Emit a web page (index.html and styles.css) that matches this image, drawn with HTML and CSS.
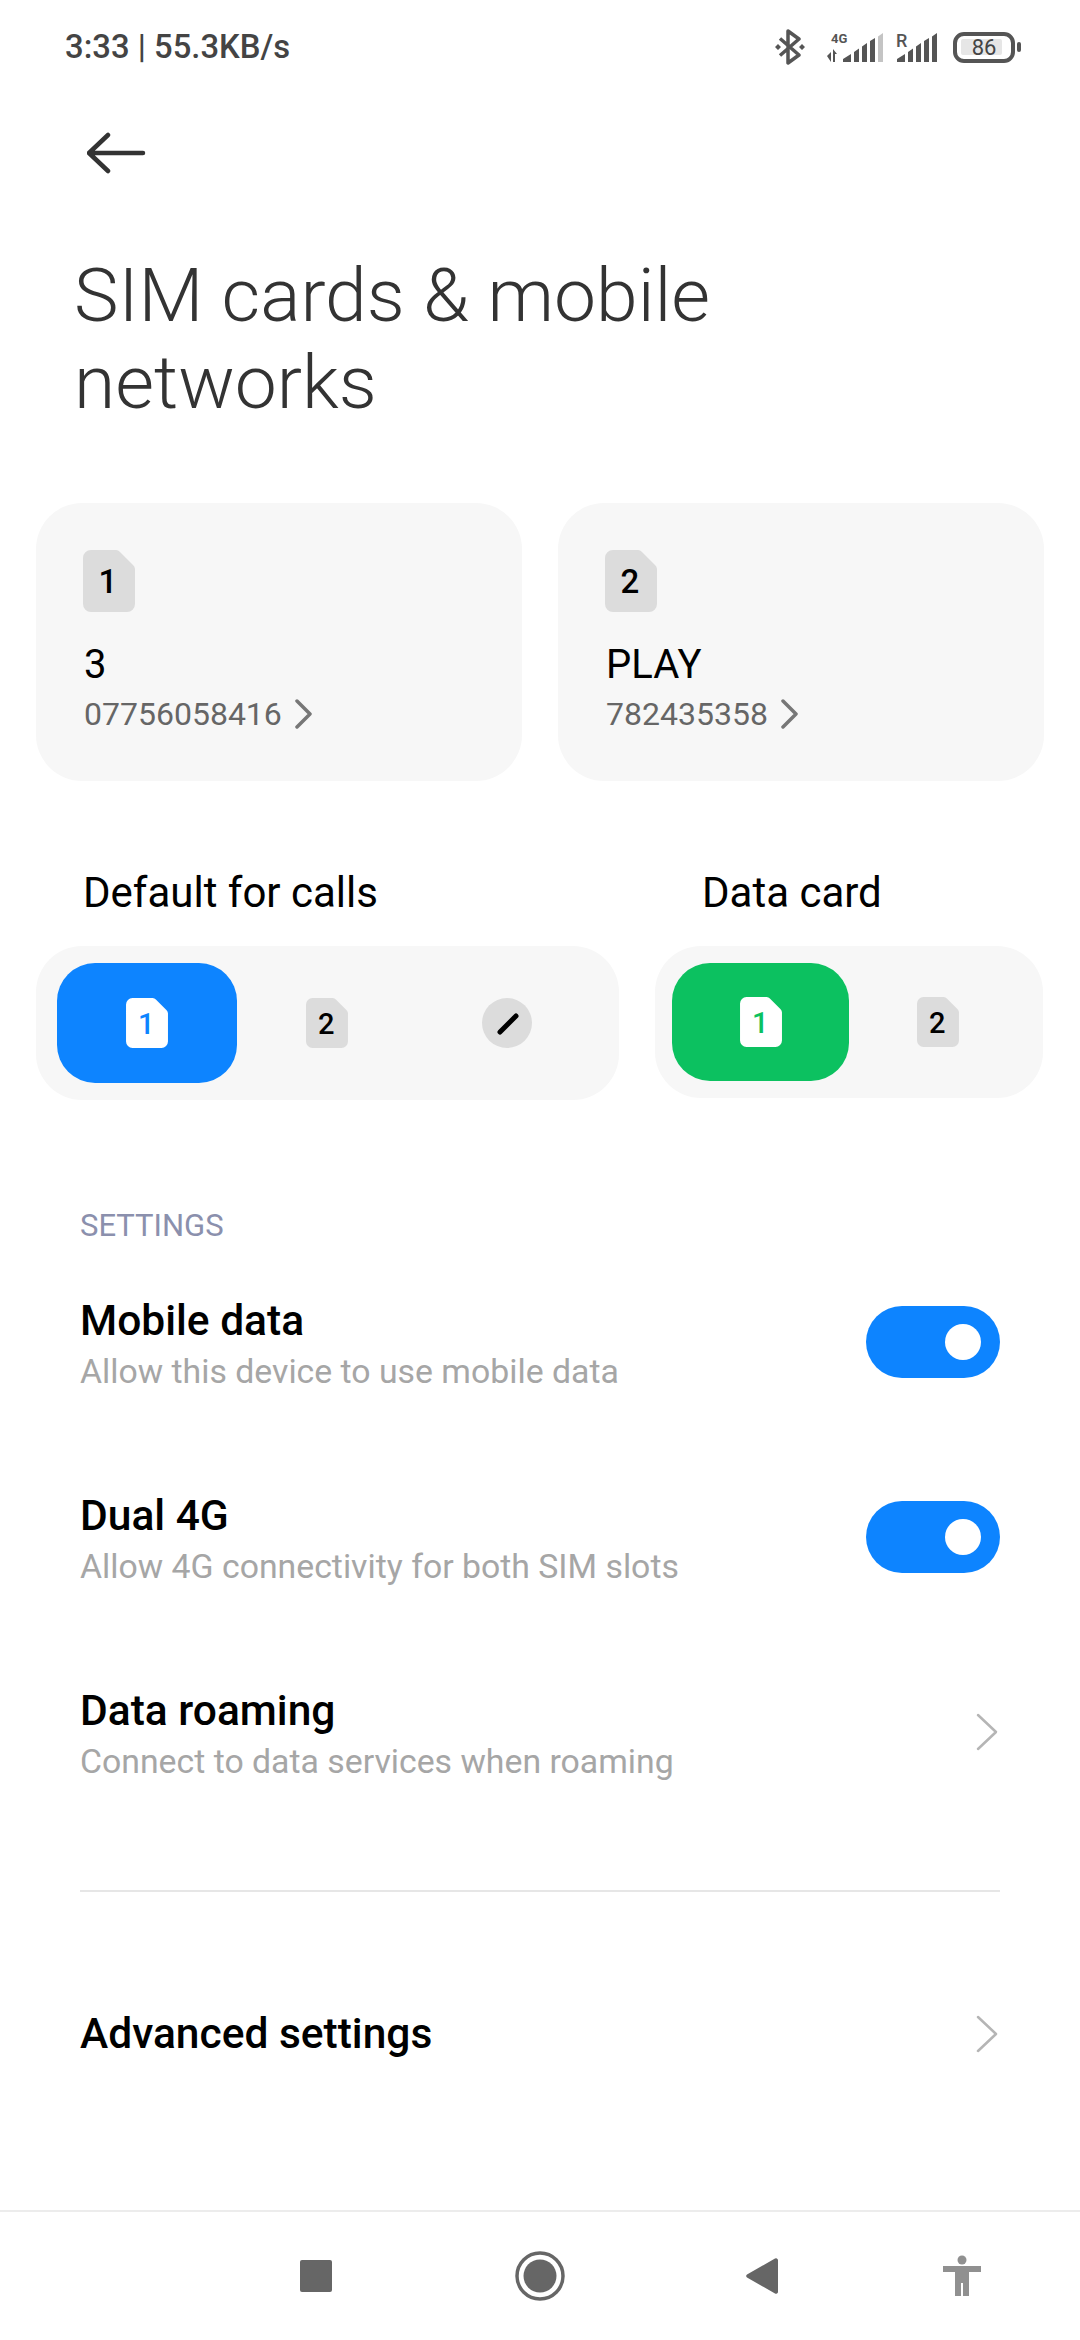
FILE: index.html
```html
<!DOCTYPE html>
<html lang="en">
<head>
    <meta charset="UTF-8">
    <meta name="viewport" content="width=device-width, initial-scale=1.0">
    <title>SIM cards &amp; mobile networks</title>
    <link rel="stylesheet" href="styles.css">
</head>
<body>
<div class="page">

    <!-- Status bar -->
    <div class="status-bar">
        <span class="status-time">3:33 | 55.3KB/s</span>
        <div class="status-icons">
            <svg class="icon-bt" width="32" height="36" viewBox="773 28 32 36">
                <path d="M779 37.500L798 54 787 62V30L798 38 779 54.500" fill="none" stroke="#555" stroke-width="3.500" stroke-linejoin="round"/>
                <path d="M777 43l3 3-3 3-3-3zM801 43l3 3-3 3-3-3z" fill="#555"/>
            </svg>
            <svg class="icon-signal" width="58" height="34" viewBox="825 28 58 34">
                <text x="830" y="41" class="net-text">4G</text>
                <path d="M826 54l4-4v10zM832 60V47l4 5h-2v8z" fill="#555"/>
                <path d="M842 60v-3l8-5v8zM853 60V50l5-3.500V60zM861 60V44.500l5-3.500v19zM869 60V39l5-3V60z" fill="#555"/>
                <path d="M877 60V34.500L882 31v29z" fill="#c4c4c4"/>
            </svg>
            <svg class="icon-signal" width="42" height="34" viewBox="895 28 42 34">
                <text x="895" y="45" class="roam-text">R</text>
                <path d="M896 60v-3l8-5v8zM907 60V50l5-3.500V60zM915 60V44.500l5-3.500v19zM923 60V39l5-3V60zM931 60V34.500L936 31v29z" fill="#555"/>
            </svg>
            <svg class="icon-battery" width="69" height="34" viewBox="952 29 69 34">
                <rect x="954" y="33" width="58" height="27" rx="9" fill="none" stroke="#555" stroke-width="4"/>
                <rect x="960" y="38" width="41" height="16" rx="2" fill="#e6e6e6"/>
                <rect x="1016" y="41" width="4" height="10" rx="2" fill="#555"/>
                <text x="983" y="54" text-anchor="middle" class="battery-text">86</text>
            </svg>
        </div>
    </div>

    <!-- Back -->
    <div class="top-bar">
        <svg width="60" height="44" viewBox="0 0 60 44">
            <path d="M2 22H56M21 4L2 22 21 40" fill="none" stroke="#333" stroke-width="4.500" stroke-linecap="round" stroke-linejoin="round"/>
        </svg>
    </div>

    <h1 class="page-title">SIM cards &amp; mobile<br>networks</h1>

    <!-- SIM cards -->
    <div class="sim-cards">
        <div class="sim-card">
            <svg class="sim-icon" width="52" height="62" viewBox="0 0 52 62">
                <path class="sim-grey" d="M8 0H33a6 6 0 0 1 4 2L50 15a6 6 0 0 1 2 4V54a8 8 0 0 1-8 8H8a8 8 0 0 1-8-8V8a8 8 0 0 1 8-8z"/>
                <text x="25" y="43" text-anchor="middle" class="sim-num">1</text>
            </svg>
            <div class="sim-name">3</div>
            <div class="sim-number">
                <span>07756058416</span>
                <svg width="18" height="30" viewBox="0 0 18 30"><path d="M2 2L15 15 2 28" fill="none" stroke="#777" stroke-width="3.500" stroke-linecap="round" stroke-linejoin="round"/></svg>
            </div>
        </div>
        <div class="sim-card">
            <svg class="sim-icon" width="52" height="62" viewBox="0 0 52 62">
                <path class="sim-grey" d="M8 0H33a6 6 0 0 1 4 2L50 15a6 6 0 0 1 2 4V54a8 8 0 0 1-8 8H8a8 8 0 0 1-8-8V8a8 8 0 0 1 8-8z"/>
                <text x="25" y="43" text-anchor="middle" class="sim-num">2</text>
            </svg>
            <div class="sim-name">PLAY</div>
            <div class="sim-number">
                <span>782435358</span>
                <svg width="18" height="30" viewBox="0 0 18 30"><path d="M2 2L15 15 2 28" fill="none" stroke="#777" stroke-width="3.500" stroke-linecap="round" stroke-linejoin="round"/></svg>
            </div>
        </div>
    </div>

    <!-- Default SIM pickers -->
    <div class="pickers">
        <div class="picker-col">
            <div class="picker-label">Default for calls</div>
            <div class="picker picker-calls">
                <div class="picker-slot slot-blue">
                    <svg width="42" height="50" viewBox="0 0 52 62">
                        <path fill="#fff" d="M8 0H33a6 6 0 0 1 4 2L50 15a6 6 0 0 1 2 4V54a8 8 0 0 1-8 8H8a8 8 0 0 1-8-8V8a8 8 0 0 1 8-8z"/>
                        <text x="25" y="45" text-anchor="middle" class="sim-num-small num-blue">1</text>
                    </svg>
                </div>
                <div class="picker-slot">
                    <svg width="42" height="50" viewBox="0 0 52 62">
                        <path class="sim-grey" d="M8 0H33a6 6 0 0 1 4 2L50 15a6 6 0 0 1 2 4V54a8 8 0 0 1-8 8H8a8 8 0 0 1-8-8V8a8 8 0 0 1 8-8z"/>
                        <text x="25" y="45" text-anchor="middle" class="sim-num-small">2</text>
                    </svg>
                </div>
                <div class="picker-slot">
                    <svg width="50" height="50" viewBox="0 0 50 50">
                        <circle cx="25" cy="25" r="25" fill="#dcdcdc"/>
                        <path d="M34 18L18 34" stroke="#000" stroke-width="5" stroke-linecap="round"/>
                    </svg>
                </div>
            </div>
        </div>
        <div class="picker-col">
            <div class="picker-label">Data card</div>
            <div class="picker picker-data">
                <div class="picker-slot slot-green">
                    <svg width="42" height="50" viewBox="0 0 52 62">
                        <path fill="#fff" d="M8 0H33a6 6 0 0 1 4 2L50 15a6 6 0 0 1 2 4V54a8 8 0 0 1-8 8H8a8 8 0 0 1-8-8V8a8 8 0 0 1 8-8z"/>
                        <text x="25" y="45" text-anchor="middle" class="sim-num-small num-green">1</text>
                    </svg>
                </div>
                <div class="picker-slot">
                    <svg width="42" height="50" viewBox="0 0 52 62">
                        <path class="sim-grey" d="M8 0H33a6 6 0 0 1 4 2L50 15a6 6 0 0 1 2 4V54a8 8 0 0 1-8 8H8a8 8 0 0 1-8-8V8a8 8 0 0 1 8-8z"/>
                        <text x="25" y="45" text-anchor="middle" class="sim-num-small">2</text>
                    </svg>
                </div>
            </div>
        </div>
    </div>

    <!-- Settings -->
    <div class="section-label">SETTINGS</div>

    <div class="row">
        <div class="row-text">
            <div class="row-title">Mobile data</div>
            <div class="row-sub">Allow this device to use mobile data</div>
        </div>
        <div class="toggle"><div class="toggle-knob"></div></div>
    </div>
    <div class="row">
        <div class="row-text">
            <div class="row-title">Dual 4G</div>
            <div class="row-sub">Allow 4G connectivity for both SIM slots</div>
        </div>
        <div class="toggle"><div class="toggle-knob"></div></div>
    </div>
    <div class="row">
        <div class="row-text">
            <div class="row-title">Data roaming</div>
            <div class="row-sub">Connect to data services when roaming</div>
        </div>
        <svg class="chevron" width="22" height="38" viewBox="0 0 22 38"><path d="M2 2L20 19 2 36" fill="none" stroke="#b5b5b5" stroke-width="2.500" stroke-linecap="round" stroke-linejoin="round"/></svg>
    </div>

    <div class="divider"></div>

    <div class="row row-single">
        <div class="row-title">Advanced settings</div>
        <svg class="chevron" width="22" height="38" viewBox="0 0 22 38"><path d="M2 2L20 19 2 36" fill="none" stroke="#b5b5b5" stroke-width="2.500" stroke-linecap="round" stroke-linejoin="round"/></svg>
    </div>

    <!-- Navigation bar -->
    <div class="nav-bar">
        <svg class="nav-recent" width="32" height="32" viewBox="0 0 32 32"><rect width="32" height="32" rx="2" fill="#666"/></svg>
        <svg class="nav-home" width="50" height="50" viewBox="0 0 50 50">
            <circle cx="25" cy="25" r="23" fill="none" stroke="#666" stroke-width="3.500"/>
            <circle cx="25" cy="25" r="16.500" fill="#666"/>
        </svg>
        <svg class="nav-back" width="32" height="38" viewBox="0 0 32 38">
            <path d="M29 1.500a2 2 0 0 1 3 1.500V35a2 2 0 0 1-3 1.500L1 20.500a2 2 0 0 1 0-3z" fill="#666"/>
        </svg>
        <svg class="nav-access" width="38" height="42" viewBox="0 0 38 42">
            <circle cx="19" cy="5" r="4.500" fill="#909090"/>
            <path d="M0 11H38V17H26V41H20V28H18V41H12V17H0z" fill="#909090"/>
        </svg>
    </div>

</div>
</body>
</html>
```

FILE: styles.css
```css
* {
    margin: 0;
    padding: 0;
    box-sizing: border-box;
}

body {
    font-family: Roboto, "Noto Sans", sans-serif;
    background-color: #fff;
    color: #000;
}

.page {
    width: 1080px;
    height: 2340px;
    display: flex;
    flex-direction: column;
    overflow: hidden;
}

/* status bar */
.status-bar {
    height: 94px;
    padding: 0 58px 0 65px;
    display: flex;
    justify-content: space-between;
    align-items: center;
}

.status-time {
    font-size: 32.800px;
    font-weight: 500;
    color: #444;
}

.status-icons {
    display: flex;
    align-items: center;
}

.icon-bt {
    margin-right: 20px;
}

.icon-signal {
    margin-right: 12px;
}

.icon-signal:nth-child(3) {
    margin-right: 15px;
}

.net-text {
    font-size: 13px;
    font-weight: 700;
    fill: #555;
}

.roam-text {
    font-size: 18px;
    font-weight: 500;
    fill: #555;
}

.battery-text {
    font-size: 22px;
    fill: #444;
}

.top-bar {
    height: 44px;
    margin-top: 37px;
    padding-left: 87px;
}

.top-bar svg {
    display: block;
}

.page-title {
    margin-top: 77px;
    padding-left: 74px;
    font-size: 75px;
    line-height: 87px;
    font-weight: 300;
    color: #333;
}

/* sim cards */
.sim-cards {
    margin-top: 77px;
    padding: 0 36px;
    display: flex;
    gap: 36px;
}

.sim-card {
    width: 486px;
    height: 278px;
    padding: 47px 48px 0;
    background-color: #f7f7f7;
    border-radius: 46px;
}

.sim-icon {
    display: block;
    margin-left: -1px;
}

.sim-grey {
    fill: #dcdcdc;
}

.sim-num {
    font-size: 33px;
    font-weight: 500;
    fill: #000;
}

.sim-num-small {
    font-size: 36px;
    font-weight: 500;
    fill: #000;
}

.num-blue {
    fill: #0d84ff;
}

.num-green {
    fill: #0cc160;
}

.sim-name {
    margin-top: 29px;
    font-size: 40px;
    line-height: 47px;
}

.sim-number {
    margin-top: 6px;
    display: flex;
    align-items: center;
    gap: 13px;
    font-size: 32px;
    line-height: 40px;
    color: #666;
}

/* default pickers */
.pickers {
    margin-top: 88px;
    padding: 0 36px;
    display: flex;
    gap: 36px;
}

.picker-label {
    padding-left: 47px;
    font-size: 42px;
    line-height: 47px;
}

.picker {
    margin-top: 30px;
    padding: 17px 22px 17px 21px;
    display: flex;
    background-color: #f7f7f7;
    border-radius: 46px;
}

.picker-calls {
    width: 583px;
    height: 154px;
}

.picker-data {
    width: 388px;
    height: 152px;
    padding: 17px;
}

.picker-slot {
    width: 180px;
    height: 120px;
    display: flex;
    justify-content: center;
    align-items: center;
    border-radius: 38px;
}

.picker-data .picker-slot {
    width: 177px;
    height: 118px;
}

.slot-blue {
    background-color: #0d84ff;
}

.slot-green {
    background-color: #0cc160;
}

/* settings rows */
.section-label {
    margin-top: 108px;
    padding-left: 80px;
    font-size: 31px;
    line-height: 36px;
    color: #8b90ad;
}

.row {
    height: 195px;
    padding: 0 80px;
    display: flex;
    justify-content: space-between;
    align-items: center;
}

.row-text {
    padding-top: 8px;
}

.row-title {
    font-size: 42.500px;
    line-height: 47px;
    font-weight: 500;
}

.row-sub {
    margin-top: 4px;
    font-size: 33.800px;
    line-height: 47px;
    color: #a6a6a6;
}

.toggle {
    width: 134px;
    height: 72px;
    padding: 18px 19px;
    display: flex;
    justify-content: flex-end;
    background-color: #0d84ff;
    border-radius: 36px;
}

.toggle-knob {
    width: 36px;
    height: 36px;
    background-color: #fff;
    border-radius: 50%;
}

.chevron {
    margin-right: 2px;
}

.divider {
    margin: 61px 80px 0;
    height: 2px;
    background-color: #e6e6e6;
}

.row-single {
    margin-top: 44px;
}

/* navigation bar */
.nav-bar {
    height: 130px;
    margin-top: auto;
    padding-left: 300px;
    display: flex;
    align-items: center;
    border-top: 2px solid #ececec;
}

.nav-recent {
    margin-right: 183px;
}

.nav-home {
    margin-right: 181px;
}

.nav-back {
    margin-right: 165px;
}
```
